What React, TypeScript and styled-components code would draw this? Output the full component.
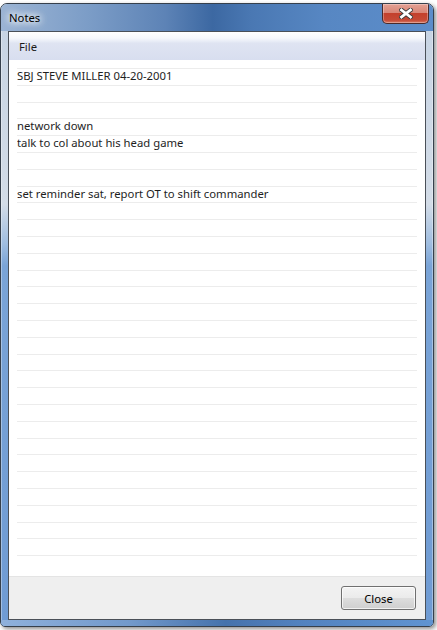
import React from 'react';
import styled, { createGlobalStyle } from 'styled-components';

const GlobalStyle = createGlobalStyle`
  html, body {
    margin: 0;
    padding: 0;
    background: #ffffff;
  }
  body {
    font-family: "Noto Sans", "Open Sans", "DejaVu Sans", sans-serif;
  }
`;

// Window frame
const Page = styled.div`
  padding: 3px 0 0 0;
  width: 437px;
  height: 630px;
  box-sizing: border-box;
`;

const Window = styled.div`
  width: 434px;
  height: 624px;
  box-sizing: border-box;
  border: 1px solid #36404c;
  border-radius: 7px 7px 5px 5px;
  padding: 0 7px;
  display: flex;
  flex-direction: column;
  overflow: hidden;
  background: linear-gradient(
    180deg,
    #c6d3e3 0px,
    #d3dce7 200px,
    #9fbde0 240px,
    #7aa4d7 262px,
    #6f9bd3 100%
  );
  box-shadow: 2px 2px 4px rgba(0, 0, 0, 0.45), inset 0 0 0 1px rgba(255, 255, 255, 0.35);
`;

const TitleBar = styled.div`
  height: 27px;
  margin: 0 -7px;
  padding: 0 4px 0 8px;
  display: flex;
  align-items: flex-start;
  background: linear-gradient(
    90deg,
    #9bb4d4 0%,
    #7c9dc7 20%,
    #5d83b6 38%,
    #3c68a2 49%,
    #4a78b3 58%,
    #5787c3 75%,
    #5c8dca 100%
  );
`;

const Title = styled.span`
  margin-top: 6px;
  font-size: 11.3px;
  line-height: 15px;
  color: #000;
  text-shadow: 0 0 6px #fff, 0 0 8px #fff, 0 0 10px rgba(255, 255, 255, 0.9);
`;

const CloseCaption = styled.div`
  margin-left: auto;
  width: 47px;
  height: 20px;
  box-sizing: border-box;
  border: 1px solid #4a2a2a;
  border-top: none;
  border-radius: 0 0 5px 5px;
  display: flex;
  align-items: center;
  justify-content: center;
  background: linear-gradient(180deg, #e4a194 0%, #d88677 45%, #c3402c 50%, #c54a36 85%, #d87a65 100%);
  box-shadow: inset 0 0 0 1px rgba(255, 255, 255, 0.3);
`;

// Client area
const Client = styled.div`
  flex: 1;
  display: flex;
  flex-direction: column;
  border: 1px solid #4a5058;
  background: #fff;
`;

const MenuBar = styled.div`
  height: 28px;
  display: flex;
  align-items: center;
  padding: 0 10px;
  background: linear-gradient(
    180deg,
    #ffffff 0%,
    #f6f8fc 22%,
    #eaeef7 32%,
    #dfe4f2 40%,
    #d8deef 100%
  );
`;

const MenuItem = styled.span`
  font-size: 11.3px;
  color: #1a1a1a;
`;

const NotesArea = styled.div`
  flex: 1;
  padding: 8px 8px 0 8px;
  background: #fff;
`;

const NoteList = styled.div`
  border-top: 1px solid #ececec;
`;

const NoteRow = styled.div`
  height: 16.8px;
  box-sizing: border-box;
  border-bottom: 1px solid #ececec;
  font-size: 11.3px;
  line-height: 14.5px;
  color: #1e1e1e;
  white-space: nowrap;
  overflow: hidden;
`;

const Footer = styled.div`
  height: 43px;
  box-sizing: border-box;
  display: flex;
  justify-content: flex-end;
  align-items: flex-start;
  padding: 9px 9px 0 0;
  background: #efefef;
  border-top: 1px solid #e4e4e4;
`;

const Button = styled.button`
  width: 75px;
  height: 24px;
  border: 1px solid #707070;
  border-radius: 3px;
  font-family: inherit;
  font-size: 11.3px;
  color: #000;
  padding: 0;
  background: linear-gradient(180deg, #f3f3f3 0%, #ebebeb 48%, #dddddd 52%, #cfcfcf 100%);
  box-shadow: inset 0 0 0 1px rgba(255, 255, 255, 0.7);
  cursor: pointer;
`;

const BottomFrame = styled.div`
  height: 6px;
  margin: 0 -7px;
  background: linear-gradient(
    90deg,
    #8fb1dc 0%,
    #7299cb 30%,
    #4572ac 52%,
    #5383c0 70%,
    #6094d1 100%
  );
`;

const notes: string[] = [
  'SBJ STEVE MILLER 04-20-2001',
  '',
  '',
  'network down',
  'talk to col about his head game',
  '',
  '',
  'set reminder sat, report OT to shift commander',
];

const ROW_COUNT = 29;

const CloseGlyph = () => (
  <svg width="14" height="11" viewBox="0 0 14 11">
    <path
      d="M2.5 2 L11.5 9 M11.5 2 L2.5 9"
      stroke="#3a3a3a"
      strokeWidth="4.6"
      strokeLinecap="square"
    />
    <path
      d="M2.5 2 L11.5 9 M11.5 2 L2.5 9"
      stroke="#ffffff"
      strokeWidth="2.8"
      strokeLinecap="square"
    />
  </svg>
);

const App: React.FC = () => {
  const rows = Array.from({ length: ROW_COUNT }, (_, i) => notes[i] ?? '');

  return (
    <>
      <GlobalStyle />
      <Page>
        <Window>
          <TitleBar>
            <Title>Notes</Title>
            <CloseCaption>
              <CloseGlyph />
            </CloseCaption>
          </TitleBar>
          <Client>
            <MenuBar>
              <MenuItem>File</MenuItem>
            </MenuBar>
            <NotesArea>
              <NoteList>
                {rows.map((text, i) => (
                  <NoteRow key={i}>{text}</NoteRow>
                ))}
              </NoteList>
            </NotesArea>
            <Footer>
              <Button type="button">Close</Button>
            </Footer>
          </Client>
          <BottomFrame />
        </Window>
      </Page>
    </>
  );
};

export default App;
